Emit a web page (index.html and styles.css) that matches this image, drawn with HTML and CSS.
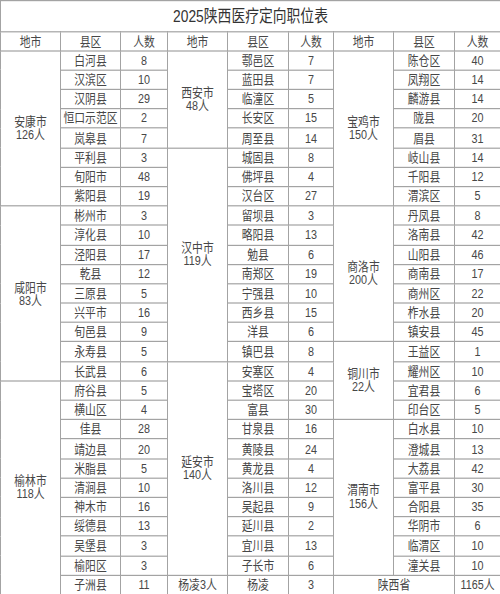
FILE: index.html
```html
<!DOCTYPE html>
<html lang="zh-CN">
<head>
<meta charset="utf-8">
<title>2025陕西医疗定向职位表</title>
<link rel="stylesheet" href="styles.css">
</head>
<body>
<div class="sheet">
<table class="grid">
<colgroup>
<col class="c60"><col class="c60"><col class="c47">
<col class="c60"><col class="c61"><col class="c45">
<col class="c60"><col class="c61"><col class="c46">
</colgroup>
<tr class="title-row"><td colspan="9" class="title">2025陕西医疗定向职位表</td></tr>
<tr class="head-row"><td>地市</td><td>县区</td><td>人数</td><td>地市</td><td>县区</td><td>人数</td><td>地市</td><td>县区</td><td>人数</td></tr>
<tr><td rowspan="8">安康市<br>126人</td><td>白河县</td><td>8</td><td rowspan="5">西安市<br>48人</td><td>鄠邑区</td><td>7</td><td rowspan="8">宝鸡市<br>150人</td><td>陈仓区</td><td>40</td></tr>
<tr><td>汉滨区</td><td>10</td><td>蓝田县</td><td>7</td><td>凤翔区</td><td>14</td></tr>
<tr><td>汉阴县</td><td>29</td><td>临潼区</td><td>5</td><td>麟游县</td><td>14</td></tr>
<tr><td>恒口示范区</td><td>2</td><td>长安区</td><td>15</td><td>陇县</td><td>20</td></tr>
<tr><td>岚皋县</td><td>7</td><td>周至县</td><td>14</td><td>眉县</td><td>31</td></tr>
<tr><td>平利县</td><td>3</td><td rowspan="11">汉中市<br>119人</td><td>城固县</td><td>8</td><td>岐山县</td><td>14</td></tr>
<tr><td>旬阳市</td><td>48</td><td>佛坪县</td><td>4</td><td>千阳县</td><td>12</td></tr>
<tr><td>紫阳县</td><td>19</td><td>汉台区</td><td>27</td><td>渭滨区</td><td>5</td></tr>
<tr><td rowspan="9">咸阳市<br>83人</td><td>彬州市</td><td>3</td><td>留坝县</td><td>3</td><td rowspan="7">商洛市<br>200人</td><td>丹凤县</td><td>8</td></tr>
<tr><td>淳化县</td><td>10</td><td>略阳县</td><td>13</td><td>洛南县</td><td>42</td></tr>
<tr><td>泾阳县</td><td>17</td><td>勉县</td><td>6</td><td>山阳县</td><td>46</td></tr>
<tr><td>乾县</td><td>12</td><td>南郑区</td><td>19</td><td>商南县</td><td>17</td></tr>
<tr><td>三原县</td><td>5</td><td>宁强县</td><td>10</td><td>商州区</td><td>22</td></tr>
<tr><td>兴平市</td><td>16</td><td>西乡县</td><td>15</td><td>柞水县</td><td>20</td></tr>
<tr><td>旬邑县</td><td>9</td><td>洋县</td><td>6</td><td>镇安县</td><td>45</td></tr>
<tr><td>永寿县</td><td>5</td><td>镇巴县</td><td>8</td><td rowspan="4">铜川市<br>22人</td><td>王益区</td><td>1</td></tr>
<tr><td>长武县</td><td>6</td><td rowspan="11">延安市<br>140人</td><td>安塞区</td><td>4</td><td>耀州区</td><td>10</td></tr>
<tr><td rowspan="11">榆林市<br>118人</td><td>府谷县</td><td>5</td><td>宝塔区</td><td>20</td><td>宜君县</td><td>6</td></tr>
<tr><td>横山区</td><td>4</td><td>富县</td><td>30</td><td>印台区</td><td>5</td></tr>
<tr><td>佳县</td><td>28</td><td>甘泉县</td><td>16</td><td rowspan="8">渭南市<br>156人</td><td>白水县</td><td>10</td></tr>
<tr><td>靖边县</td><td>20</td><td>黄陵县</td><td>24</td><td>澄城县</td><td>13</td></tr>
<tr><td>米脂县</td><td>5</td><td>黄龙县</td><td>4</td><td>大荔县</td><td>42</td></tr>
<tr><td>清涧县</td><td>10</td><td>洛川县</td><td>12</td><td>富平县</td><td>30</td></tr>
<tr><td>神木市</td><td>16</td><td>吴起县</td><td>9</td><td>合阳县</td><td>35</td></tr>
<tr><td>绥德县</td><td>13</td><td>延川县</td><td>2</td><td>华阴市</td><td>6</td></tr>
<tr><td>吴堡县</td><td>3</td><td>宜川县</td><td>13</td><td>临渭区</td><td>10</td></tr>
<tr><td>榆阳区</td><td>3</td><td>子长市</td><td>6</td><td>潼关县</td><td>10</td></tr>
<tr><td>子洲县</td><td>11</td><td>杨凌3人</td><td>杨凌</td><td>3</td><td colspan="2">陕西省</td><td>1165人</td></tr>
</table>
</div>
</body>
</html>
```

FILE: styles.css
```css
html, body {
  margin: 0;
  padding: 0;
  background: #ffffff;
}

body {
  min-height: 594px;
  overflow: hidden;
}

.sheet {
  width: 500px;
  height: 495px;
  transform: scaleY(1.2);
  transform-origin: 0 0;
}

.grid {
  width: 500px;
  table-layout: fixed;
  border-collapse: collapse;
  font-family: "Liberation Sans", "Noto Sans CJK SC", sans-serif;
  font-size: 10.8px;
  line-height: 11px;
  color: #474747;
}

.c60 { width: 60px; }
.c61 { width: 61px; }
.c47 { width: 47px; }
.c45 { width: 45px; }
.c46 { width: 46px; }

.grid td {
  border: 1px solid #a3a3a3;
  padding: 0;
  text-align: center;
  vertical-align: middle;
  white-space: nowrap;
}

.grid tr {
  height: 16.19px;
}

.grid .title-row {
  height: 25.83px;
}

.grid .head-row {
  height: 15.83px;
}

.grid .title {
  font-size: 13.8px;
  color: #333333;
}
```
